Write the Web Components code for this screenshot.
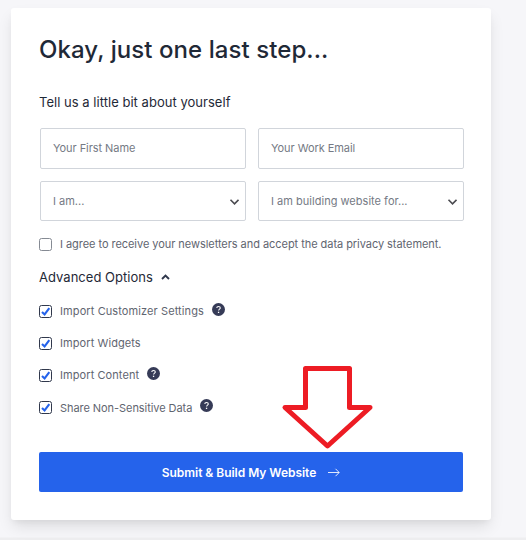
<!DOCTYPE html>
<html lang="en">
<head>
<meta charset="utf-8">
<title>Build My Website</title>
<style>
  html, body { margin:0; block-size:100%; }
  body {
    background:#f6f6f9;
    color:#1f2937;
    font-family:Inter, "Liberation Sans", sans-serif;
    overflow:hidden;
  }
</style>
</head>
<body>
<setup-page>
  <setup-card heading="Okay, just one last step..." intro="Tell us a little bit about yourself">
    <form-grid>
      <form-field style="--track:-.06px">Your First Name</form-field>
      <form-field style="--track:-.06px">Your Work Email</form-field>
      <form-field kind="select">I am...</form-field>
      <form-field kind="select" style="--track:.02px">I am building website for...</form-field>
    </form-grid>
    <check-row class="consent" style="--track:-.05px">I agree to receive your newsletters and accept the data privacy statement.</check-row>
    <option-group label="Advanced Options">
      <check-row checked help style="--track:.1px">Import Customizer Settings</check-row>
      <check-row checked style="--track:.08px">Import Widgets</check-row>
      <check-row checked help style="--track:.08px">Import Content</check-row>
      <check-row checked help style="--track:-.06px; --drop:1px">Share Non-Sensitive Data</check-row>
    </option-group>
    <submit-button>Submit &amp; Build My Website</submit-button>
  </setup-card>
  <pointer-arrow></pointer-arrow>
</setup-page>

<script>
// small helper: every element here is a template plus an open shadow root
function define(name, html, setup){
  const template = document.createElement('template');
  template.innerHTML = html;
  customElements.define(name, class extends HTMLElement{
    constructor(){
      super();
      this.attachShadow({mode:'open'}).appendChild(template.content.cloneNode(true));
      if (setup) setup(this, this.shadowRoot);
    }
  });
}

define('setup-page', /*html*/`
  <style>
    :host{
      display:block; position:relative; box-sizing:border-box;
      inline-size:526px; block-size:540px; padding:8px 35px 0 11px;
      background:linear-gradient(to bottom, transparent 537px, #eeeef0 538px);
    }
  </style>
  <slot></slot>
`);

define('setup-card', /*html*/`
  <style>
    :host{
      display:flex; flex-direction:column; box-sizing:border-box;
      block-size:512px; padding:24px 27px 28px 28px;
      background:#fff; border-radius:3px;
      box-shadow:0 8px 16px -2px rgba(0,0,0,.11), 0 4px 6px -2px rgba(0,0,0,.05);
    }
    h1{ margin:0; font-size:24px; line-height:36px; font-weight:500; letter-spacing:.07px; white-space:nowrap; }
    p{ margin:24px 0 16px; font-size:13px; line-height:20px; letter-spacing:.03px; white-space:nowrap; }
  </style>
  <h1></h1>
  <p></p>
  <slot></slot>
`, (host, root) => {
  root.querySelector('h1').textContent = host.getAttribute('heading');
  root.querySelector('p').textContent = host.getAttribute('intro');
});

define('form-grid', /*html*/`
  <style>
    :host{
      display:grid; grid-template-columns:206px 206px; grid-template-rows:41px 40px;
      gap:12px; margin-inline-start:1px;
    }
  </style>
  <slot></slot>
`);

define('form-field', /*html*/`
  <style>
    :host{
      display:flex; align-items:center; justify-content:space-between; box-sizing:border-box;
      padding:0 6px 1px 12px; border:1px solid #d1d5db; border-radius:2px;
      color:#757a84; font-size:11px; white-space:nowrap; letter-spacing:var(--track, 0);
    }
    :host([kind="select"]){ padding:0 6px 0 12px; }
    svg{ display:none; margin-block-start:2px; }
    :host([kind="select"]) svg{ display:block; }
  </style>
  <slot></slot>
  <svg width="10" height="6" viewBox="0 0 10 6" fill="none" stroke="#4b4b50" stroke-width="1.6"><path d="M1.500 .8l4 4 4-4"/></svg>
`);

define('check-row', /*html*/`
  <style>
    :host{
      display:flex; align-items:center; block-size:16px;
      color:#5f6570; font-size:11px; white-space:nowrap; letter-spacing:var(--track, 0);
    }
    :host(.consent){ margin-block-start:15px; }
    .box{
      flex:none; box-sizing:border-box; inline-size:13px; block-size:13px; margin-inline-end:8px;
      border:1px solid #858a93; border-radius:2.5px;
    }
    .text{ padding-block-start:calc(var(--drop, 0px) * 2); }
    :host([checked]) .box{ border-color:#30384c; }
    .box svg, .help{ display:none; }
    :host([checked]) .box svg{ display:block; }
    :host([help]) .help{ display:block; margin:-3px 0 0 8px; }
  </style>
  <span class="box"><svg width="11" height="11" viewBox="0 0 11 11" fill="none" stroke="#2563eb" stroke-width="2.1"><path d="M2 5.900l2.600 2.500 4.700-6.300"/></svg></span>
  <span class="text"><slot></slot></span>
  <svg class="help" width="13" height="13" viewBox="0 0 13 13" fill="none">
    <circle cx="6.5" cy="6.5" r="6.5" fill="#363b57"/>
    <path d="M4.8 5.1c0-1 .7-1.6 1.7-1.6s1.8.6 1.8 1.5c0 1.1-1.7 1.1-1.7 2.5" stroke="#fff" stroke-width="1.1"/>
    <rect x="5.9" y="8.7" width="1.3" height="1.3" fill="#fff"/>
  </svg>
`);

define('option-group', /*html*/`
  <style>
    :host{ display:block; margin-block-start:15px; }
    header{ display:flex; align-items:center; gap:8px; block-size:20px; font-size:13px; letter-spacing:.03px; white-space:nowrap; }
    .options{ display:grid; gap:16px; margin-block-start:16px; }
  </style>
  <header>
    <span></span>
    <svg width="9" height="6" viewBox="0 0 9 6" fill="none" stroke="#30384c" stroke-width="1.9"><path d="M1 5l3.5-3.5L8 5"/></svg>
  </header>
  <div class="options"><slot></slot></div>
`, (host, root) => {
  root.querySelector('header span').textContent = host.getAttribute('label');
});

define('submit-button', /*html*/`
  <style>
    :host{ display:block; inline-size:424px; margin-block-start:auto; }
    button{
      display:flex; align-items:center; justify-content:center; gap:12px;
      inline-size:100%; block-size:40px; padding:0; border:0; border-radius:2px;
      background:#2563eb; color:#fff; font:600 12px Inter, "Liberation Sans", sans-serif;
      letter-spacing:-.03px; white-space:nowrap;
    }
  </style>
  <button>
    <span><slot></slot></span>
    <svg width="12" height="9" viewBox="0 0 12 9" fill="none" stroke="#fff" stroke-opacity=".85"><path d="M0 4.5h11M7.5.8l3.7 3.7-3.7 3.7"/></svg>
  </button>
`);

// callout drawn over the card, tip resting on the submit button
define('pointer-arrow', /*html*/`
  <style>
    :host{ position:absolute; inset:364px auto auto 280px; pointer-events:none; }
    svg{ display:block; }
  </style>
  <svg width="96" height="86" viewBox="280 364 96 86" fill="none" stroke="#ed1c24" stroke-width="5" stroke-linejoin="round">
    <path d="M305.5 368.5h44v39h20.5L327.5 446 285 407.5h20.5z"/>
  </svg>
`);
</script>
</body>
</html>
